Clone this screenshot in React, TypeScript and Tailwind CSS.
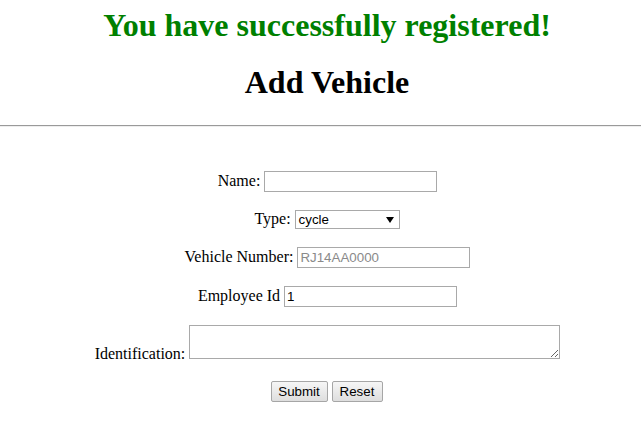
import React from "react";

export default function App() {
  return (
    <div className="w-[641px] h-[435px] bg-white text-black font-['Liberation_Serif',serif]">
      <div className="pl-[13px] text-center pt-[7px]">
        <h1 className="text-[32px] leading-[37px] font-bold text-[#008000]">You have successfully registered!</h1>
        <h1 className="mt-[20px] text-[32px] leading-[37px] font-bold text-black">Add Vehicle</h1>
      </div>
      <div className="mt-[24px] h-[2px] border-t border-b border-t-[#9a9a9a] border-b-[#eeeeee]" />
      <form className="pl-[13px] pt-[44px] flex flex-col items-center text-[16px]">
        <div className="flex items-baseline justify-center h-[21px] pl-[1px]">
          <span className="leading-[18px]">Name:&nbsp;</span>
          <input
            type="text"
            className="w-[173px] h-[21px] border border-[#a9a9a9] px-[2px] text-[13.33px] font-['Liberation_Sans',Arial,sans-serif] outline-none"
          />
        </div>
        <div className="mt-[18px] flex items-baseline justify-center h-[19px]">
          <span className="leading-[18px]">Type:&nbsp;</span>
          <div className="relative w-[105px] h-[19px] border border-[#a9a9a9] bg-white text-left text-[13.33px] font-['Liberation_Sans',Arial,sans-serif] leading-[17px] pl-[3px]">
            cycle
            <svg className="absolute right-[5px] top-[6px]" width="8" height="6" viewBox="0 0 8 6">
              <path d="M0 0 H8 L4 6 Z" fill="#000" />
            </svg>
          </div>
        </div>
        <div className="mt-[18px] flex items-baseline justify-center h-[21px] pl-[1px]">
          <span className="leading-[18px]">Vehicle Number:&nbsp;</span>
          <input
            type="text"
            placeholder="RJ14AA0000"
            className="w-[173px] h-[21px] border border-[#a9a9a9] px-[2px] text-[13.33px] font-['Liberation_Sans',Arial,sans-serif] outline-none placeholder:text-[#8a8a8a]"
          />
        </div>
        <div className="mt-[18px] flex items-baseline justify-center h-[21px] pl-[1px]">
          <span className="leading-[18px]">Employee Id&nbsp;</span>
          <input
            type="text"
            defaultValue="1"
            className="w-[173px] h-[21px] border border-[#a9a9a9] px-[2px] text-[13.33px] font-['Liberation_Sans',Arial,sans-serif] outline-none"
          />
        </div>
        <div className="mt-[18px] flex items-end justify-center pl-[1px]">
          <span className="leading-[16px] -mb-[3px]">Identification:&nbsp;</span>
          <textarea className="block w-[371px] h-[34px] border border-[#a9a9a9] text-[13.33px] font-['Liberation_Sans',Arial,sans-serif] outline-none resize" />
        </div>
        <div className="mt-[22px] flex justify-center gap-[4px] pr-[1px]">
          <button
            type="button"
            className="w-[57px] h-[21px] rounded-[2px] border border-[#a6a6a6] bg-gradient-to-b from-[#f6f6f6] to-[#dedede] text-[13.33px] font-['Liberation_Sans',Arial,sans-serif] text-black leading-[19px]"
          >
            Submit
          </button>
          <button
            type="button"
            className="w-[51px] h-[21px] rounded-[2px] border border-[#a6a6a6] bg-gradient-to-b from-[#f6f6f6] to-[#dedede] text-[13.33px] font-['Liberation_Sans',Arial,sans-serif] text-black leading-[19px]"
          >
            Reset
          </button>
        </div>
      </form>
    </div>
  );
}
